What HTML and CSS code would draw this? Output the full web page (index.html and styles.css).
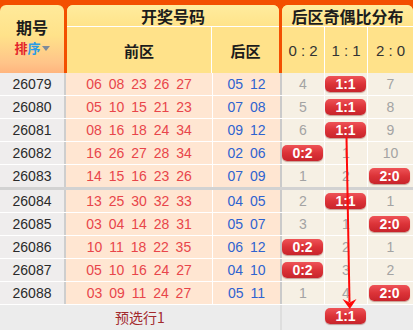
FILE: index.html
```html
<!DOCTYPE html>
<html lang="zh-CN">
<head>
<meta charset="utf-8">
<title>后区奇偶比分布</title>
<link rel="stylesheet" href="styles.css">
</head>
<body>
<div class="board">
  <div class="head">
    <div class="h-no">
      <div class="t-no">期号</div>
      <div class="sort"><span class="s1">排</span><span class="s2">序</span><span class="tri"></span></div>
    </div>
    <div class="h-draw">
      <div class="h-title">开奖号码</div>
      <div class="h-sub">
        <div class="hs-front">前区</div>
        <div class="hs-back">后区</div>
      </div>
    </div>
    <div class="h-dist">
      <div class="h-title">后区奇偶比分布</div>
      <div class="h-sub">
        <div class="hs-r">0 : 2</div>
        <div class="hs-r">1 : 1</div>
        <div class="hs-r last">2 : 0</div>
      </div>
    </div>
  </div>

  <div class="rows">
    <div class="row"><div class="c-no">26079</div><div class="c-front">06 08 23 26 27</div><div class="c-back">05 12</div><div class="c-r">4</div><div class="c-r"><span class="badge">1:1</span></div><div class="c-r last">7</div></div>
    <div class="row"><div class="c-no">26080</div><div class="c-front">05 10 15 21 23</div><div class="c-back">07 08</div><div class="c-r">5</div><div class="c-r"><span class="badge">1:1</span></div><div class="c-r last">8</div></div>
    <div class="row"><div class="c-no">26081</div><div class="c-front">08 16 18 24 34</div><div class="c-back">09 12</div><div class="c-r">6</div><div class="c-r"><span class="badge">1:1</span></div><div class="c-r last">9</div></div>
    <div class="row"><div class="c-no">26082</div><div class="c-front">16 26 27 28 34</div><div class="c-back">02 06</div><div class="c-r"><span class="badge">0:2</span></div><div class="c-r">1</div><div class="c-r last">10</div></div>
    <div class="row sep"><div class="c-no">26083</div><div class="c-front">14 15 16 23 26</div><div class="c-back">07 09</div><div class="c-r">1</div><div class="c-r">2</div><div class="c-r last"><span class="badge">2:0</span></div></div>
    <div class="row"><div class="c-no">26084</div><div class="c-front">13 25 30 32 33</div><div class="c-back">04 05</div><div class="c-r">2</div><div class="c-r"><span class="badge">1:1</span></div><div class="c-r last">1</div></div>
    <div class="row"><div class="c-no">26085</div><div class="c-front">03 04 14 28 31</div><div class="c-back">05 07</div><div class="c-r">3</div><div class="c-r">1</div><div class="c-r last"><span class="badge">2:0</span></div></div>
    <div class="row"><div class="c-no">26086</div><div class="c-front">10 11 18 22 35</div><div class="c-back">06 12</div><div class="c-r"><span class="badge">0:2</span></div><div class="c-r">2</div><div class="c-r last">1</div></div>
    <div class="row"><div class="c-no">26087</div><div class="c-front">05 10 16 24 27</div><div class="c-back">04 10</div><div class="c-r"><span class="badge">0:2</span></div><div class="c-r">3</div><div class="c-r last">2</div></div>
    <div class="row"><div class="c-no">26088</div><div class="c-front">03 09 11 24 27</div><div class="c-back">05 11</div><div class="c-r">1</div><div class="c-r">4</div><div class="c-r last"><span class="badge">2:0</span></div></div>
  </div>

  <div class="foot">
    <div class="f-left">预选行1</div>
    <div class="f-r"></div>
    <div class="f-r"><span class="badge">1:1</span></div>
    <div class="f-r last"></div>
  </div>

  <svg class="arrow" width="413" height="330" viewBox="0 0 413 330">
    <line x1="346.5" y1="137" x2="349.5" y2="302" stroke="#ff0a0a" stroke-width="2"/>
    <polygon points="342.5,299 349.6,302.5 356.5,299 349.8,309" fill="#ff0a0a"/>
  </svg>
</div>
</body>
</html>
```

FILE: styles.css
```css
* { box-sizing: border-box; }
html, body { margin: 0; padding: 0; background: #ffffff; }
body {
  font-family: "Liberation Sans", "Noto Sans CJK SC", Arial, sans-serif;
  font-size: 14px;
  color: #333;
}
.board {
  position: relative;
  width: 413px;
  height: 330px;
  overflow: hidden;
  background: #ececec;
}

/* header */
.head {
  display: grid;
  grid-template-columns: 64px 212px 131px;
  column-gap: 3px;
  height: 73px;
  padding-top: 5px;
  background: #f34f00;
}
.h-no {
  border-radius: 6px 6px 0 0;
  background: linear-gradient(#ffea9a 0%, #ffe28a 45%, #ffc489 85%, #ffb57e 100%);
  display: flex;
  flex-direction: column;
  align-items: center;
  padding-top: 14px;
}
.t-no {
  font-family: "Noto Sans CJK SC", sans-serif;
  font-weight: bold;
  font-size: 16px;
  line-height: 16px;
  color: #1c1c1c;
}
.sort {
  display: flex;
  align-items: center;
  margin-top: 6px;
  font-family: "Noto Sans CJK SC", sans-serif;
  font-weight: bold;
  font-size: 13px;
  line-height: 14px;
}
.s1 { color: #e3242b; }
.s2 { color: #2b9ce6; }
.tri {
  width: 0;
  height: 0;
  margin-left: 1px;
  border-left: 4px solid transparent;
  border-right: 4px solid transparent;
  border-top: 5px solid #7d8a99;
}
.h-draw, .h-dist {
  border-radius: 6px 6px 0 0;
  display: flex;
  flex-direction: column;
  background: #ffe38b;
}
.h-title {
  height: 22px;
  border-radius: 6px 6px 0 0;
  border-bottom: 1px solid #ffffff;
  background: linear-gradient(#ffec9e, #ffe38a);
  display: flex;
  align-items: center;
  justify-content: center;
  font-family: "Noto Sans CJK SC", sans-serif;
  font-weight: bold;
  font-size: 16px;
  line-height: 18px;
  color: #1c1c1c;
}
.h-sub {
  flex: 1;
  display: flex;
  background: #ffe28a;
}
.hs-front, .hs-back {
  display: flex;
  align-items: center;
  justify-content: center;
  font-family: "Noto Sans CJK SC", sans-serif;
  font-weight: bold;
  font-size: 15px;
  color: #1c1c1c;
}
.hs-front { width: 145px; border-right: 1px solid #ffffff; }
.hs-back { flex: 1; }
.hs-r {
  width: 43px;
  border-right: 1px solid #ffffff;
  display: flex;
  align-items: center;
  justify-content: center;
  font-size: 15px;
  color: #333;
}
.hs-r.last { width: auto; flex: 1; border-right: 0; }

/* rows */
.row {
  display: flex;
  height: 23px;
  border-bottom: 1px solid #ffffff;
}
.row.sep { height: 25px; border-bottom: 3px solid #d2d2d2; }
.row > div { line-height: 22px; text-align: center; }
.c-no {
  width: 66px;
  border-right: 2px solid #cecece;
  background: #efeded;
  color: #2a2a2a;
}
.c-front {
  width: 147px;
  border-right: 1px solid #ffffff;
  background: #ffe6d2;
  color: #e8454a;
  word-spacing: 3px;
}
.c-back {
  width: 69px;
  border-right: 2px solid #cacaca;
  background: #ffe6d2;
  color: #2f63d0;
  word-spacing: 3px;
}
.c-r {
  width: 43px;
  border-right: 1px solid #ffffff;
  background: #f6f0e4;
  color: #a3a3a3;
  position: relative;
}
.c-r.last { width: 45px; border-right: 0; }
.c-r .badge, .f-r .badge {
  position: absolute;
  left: 0;
  top: 3px;
}

.badge {
  display: block;
  width: 41px;
  height: 16px;
  border-radius: 5px;
  background: linear-gradient(#ee5357 0%, #dc3338 50%, #c8242b 100%);
  box-shadow: 0 1px 1px rgba(110, 0, 0, 0.35);
  color: #ffffff;
  font-weight: bold;
  font-size: 14px;
  line-height: 16px;
  text-align: center;
}
.c-r.last .badge { left: 1px; }

/* footer */
.foot {
  display: flex;
  height: 25px;
  background: #ececec;
}
.f-left {
  width: 282px;
  border-right: 2px solid #dedede;
  text-align: center;
  line-height: 25px;
  font-family: "Noto Sans CJK SC", sans-serif;
  font-size: 14px;
  color: #a32a2c;
}
.f-r {
  width: 43px;
  position: relative;
}
.f-r.last { width: 45px; }

.arrow {
  position: absolute;
  left: 0;
  top: 0;
  pointer-events: none;
}
```
